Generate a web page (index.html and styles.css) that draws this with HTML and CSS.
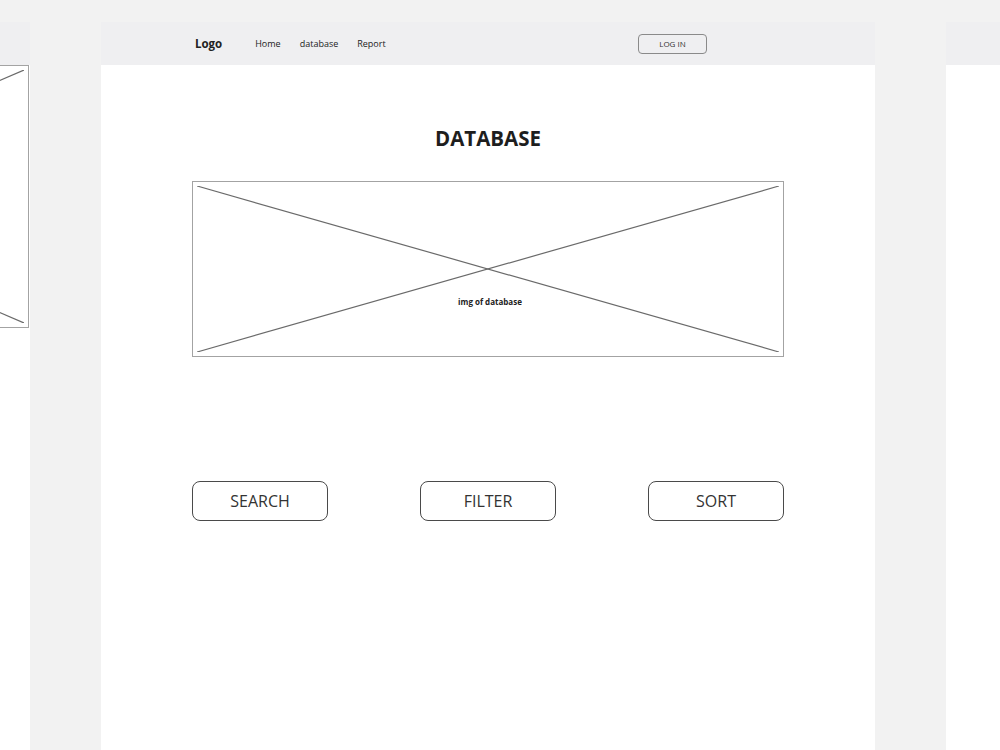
FILE: index.html
```html
<!DOCTYPE html>
<html lang="en">
<head>
  <meta charset="UTF-8">
  <title>Database - Wireframe</title>
  <link rel="stylesheet" href="styles.css">
</head>
<body>
  <div class="canvas">
    <!-- previous page, only its right edge is in view -->
    <div class="frame frame-prev">
      <div class="topbar"></div>
      <div class="prev-body">
        <div class="placeholder">
          <svg class="cross" viewBox="0 0 100 100" preserveAspectRatio="none">
            <line x1="0" y1="0" x2="100" y2="100" vector-effect="non-scaling-stroke"/>
            <line x1="0" y1="100" x2="100" y2="0" vector-effect="non-scaling-stroke"/>
          </svg>
        </div>
      </div>
    </div>

    <!-- database page -->
    <div class="frame frame-main">
      <div class="topbar">
        <span class="logo">Logo</span>
        <nav class="nav">
          <a href="#">Home</a>
          <a href="#">database</a>
          <a href="#">Report</a>
        </nav>
        <button class="login">LOG IN</button>
      </div>

      <div class="page">
        <h1>DATABASE</h1>

        <div class="placeholder">
          <svg class="cross" viewBox="0 0 100 100" preserveAspectRatio="none">
            <line x1="0" y1="0" x2="100" y2="100" vector-effect="non-scaling-stroke"/>
            <line x1="0" y1="100" x2="100" y2="0" vector-effect="non-scaling-stroke"/>
          </svg>
          <span class="caption">img of database</span>
        </div>

        <div class="actions">
          <button class="action">SEARCH</button>
          <button class="action">FILTER</button>
          <button class="action">SORT</button>
        </div>
      </div>
    </div>

    <!-- next page, only its left edge is in view -->
    <div class="frame frame-next">
      <div class="topbar"></div>
    </div>
  </div>
</body>
</html>
```

FILE: styles.css
```css
body {
  margin: 0;
  background-color: #f2f2f2;
  font-family: 'Open Sans', 'Liberation Sans', sans-serif;
  color: #222;
  overflow: hidden;
  height: 750px;
}

.canvas {
  display: flex;
  gap: 71px;
  padding-top: 22px;
}

.frame {
  height: 728px;
  background-color: #ffffff;
  display: flex;
  flex-direction: column;
  overflow: hidden;
}

.frame-prev {
  flex: 0 0 30px;
}

.frame-main {
  flex: 0 0 774px;
}

.frame-next {
  flex: 1 1 0;
  min-width: 0;
}

.topbar {
  height: 43px;
  flex-shrink: 0;
  background-color: #efeff1;
  display: flex;
  align-items: center;
  padding-left: 94px;
  padding-right: 168px;
}

.logo {
  font-size: 11.5px;
  font-weight: 700;
  color: #222;
  margin-right: 33px;
}

.nav {
  display: flex;
  gap: 19px;
}

.nav a {
  font-size: 9px;
  color: #222;
  text-decoration: none;
}

.login {
  margin-left: auto;
  width: 69px;
  height: 20px;
  padding: 0;
  background-color: #efeff1;
  border: 1px solid #8a8a8a;
  border-radius: 4px;
  font-family: inherit;
  font-size: 8px;
  color: #333;
}

.prev-body {
  display: flex;
  justify-content: flex-end;
  padding-right: 1px;
}

.page {
  display: flex;
  flex-direction: column;
  align-items: center;
}

h1 {
  margin: 59px 0 29px;
  font-size: 20.5px;
  line-height: 28px;
  font-weight: 700;
  color: #1e1e1e;
}

.placeholder {
  position: relative;
  box-sizing: border-box;
  flex-shrink: 0;
  width: 592px;
  height: 176px;
  border: 1px solid #a3a3a3;
  display: flex;
  justify-content: center;
}

.prev-body .placeholder {
  width: 600px;
  height: 263px;
}

.cross {
  position: absolute;
  left: 4px;
  top: 4px;
  width: calc(100% - 8px);
  height: calc(100% - 8px);
}

.cross line {
  stroke: #6a6a6a;
  stroke-width: 1.2;
}

.caption {
  position: relative;
  margin: 114px 0 0 4px;
  font-size: 8px;
  font-weight: 700;
  color: #222;
  height: 12px;
}

.actions {
  width: 592px;
  margin-top: 124px;
  display: flex;
  justify-content: space-between;
}

.action {
  box-sizing: border-box;
  width: 136px;
  height: 40px;
  background-color: #ffffff;
  border: 1px solid #4a4a4a;
  border-radius: 8px;
  font-family: inherit;
  font-size: 16px;
  color: #333;
}
```
